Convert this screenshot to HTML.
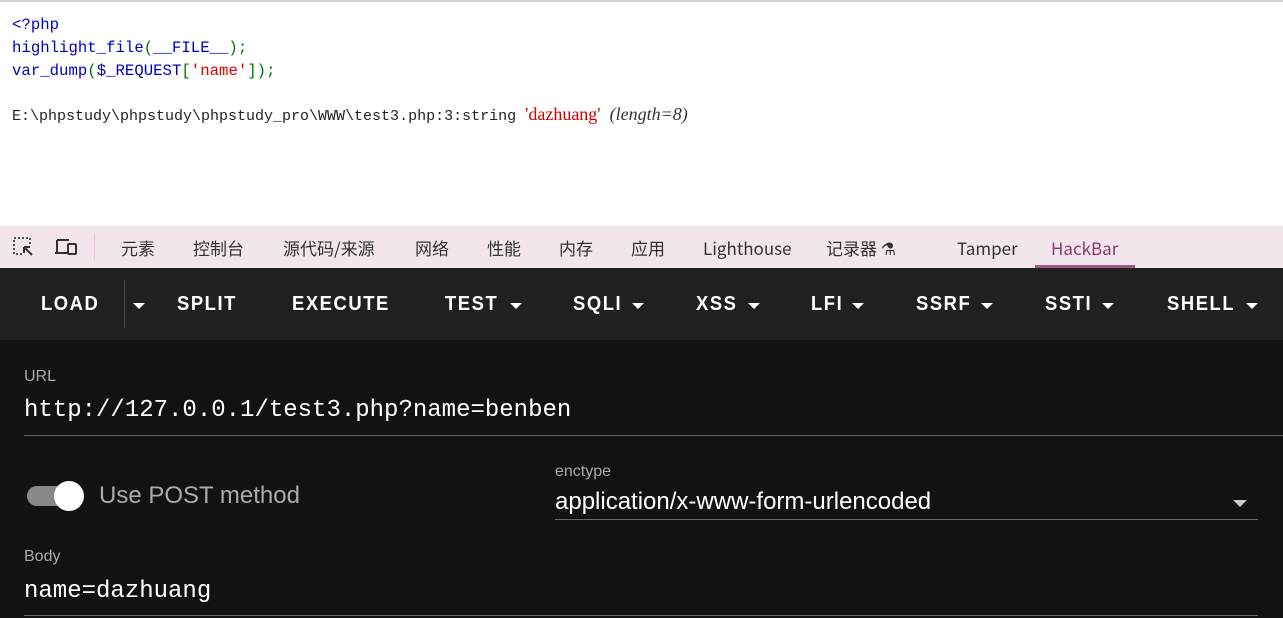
<!DOCTYPE html>
<html><head><meta charset="utf-8"><style>
*{margin:0;padding:0;box-sizing:border-box}
body{width:1283px;height:618px;overflow:hidden;position:relative;background:#121212;font-family:"Liberation Sans","Noto Sans CJK SC",sans-serif}
.a{position:absolute;white-space:nowrap}
#top{position:absolute;left:0;top:0;width:1283px;height:226px;background:#fff;border-top:2px solid #d0d0d0}
.code{font-family:"Liberation Mono","Noto Sans CJK SC",monospace;font-size:16px;line-height:23px;color:#0000bb;transform:scaleX(.98);transform-origin:left}
.g{color:#007700}.r{color:#dd0000}
#tb{position:absolute;left:0;top:226px;width:1283px;height:42px;background:#f3e5ee}
#tb .t{position:absolute;top:11px;height:22px;line-height:22px;font-size:17px;color:#333;font-family:"Noto Sans CJK SC",sans-serif}
#menu{position:absolute;left:0;top:268px;width:1283px;height:72px;background:#202020}
#menu .m{position:absolute;top:25px;color:#fff;font-weight:bold;font-size:20px;letter-spacing:1.7px;font-family:"Liberation Sans",sans-serif;transform:scaleX(.92);transform-origin:left}
.ar{position:absolute;top:35px;width:0;height:0;border-left:6px solid transparent;border-right:6px solid transparent;border-top:6px solid #fff}
.lbl{color:#aaa;font-size:16px}
.mono{font-family:"Liberation Mono",monospace;color:#fff;font-size:24px}
.line{position:absolute;height:1px;background:#666}
</style></head><body>
<div id="top">
<div class="a code" style="left:12px;top:12px">
<div>&lt;?php</div>
<div>highlight_file<span class="g">(</span>__FILE__<span class="g">);</span></div>
<div>var_dump<span class="g">(</span>$_REQUEST<span class="g">[</span><span class="r">'name'</span><span class="g">]);</span></div>
</div>
<div class="a" style="left:12px;top:102px;font-family:'Liberation Mono',monospace;font-size:15px;color:#222;letter-spacing:0px">E:\phpstudy\phpstudy\phpstudy_pro\WWW\test3.php:3:string <span style="color:#cc0000;font-family:'Liberation Serif',serif;font-size:18px">'dazhuang'</span> <i style="font-family:'Liberation Serif',serif;font-size:18px;color:#333">(length=8)</i></div>
</div>
<div id="tb">
<svg class="a" style="left:13px;top:11px" width="22" height="20" viewBox="0 0 22 20"><rect x="1" y="1" width="16" height="16" fill="none" stroke="#555" stroke-width="2" stroke-dasharray="2 2"/><rect x="9" y="8" width="12" height="12" fill="#f3e5ee"/><path d="M11 10l8 8M11 10v6M11 10h6" stroke="#333" stroke-width="2" fill="none"/></svg>
<svg class="a" style="left:54px;top:12px" width="24" height="18" viewBox="0 0 24 18"><path d="M3 2h12M3 2v12M1 15h14" stroke="#333" stroke-width="2" fill="none"/><rect x="14" y="6" width="8" height="10" rx="1" fill="none" stroke="#333" stroke-width="2"/></svg>
<div class="a" style="left:94px;top:8px;width:1px;height:26px;background:#e8c6dc"></div>
<span class="t" style="left:121px">元素</span>
<span class="t" style="left:193px">控制台</span>
<span class="t" style="left:283px">源代码/来源</span>
<span class="t" style="left:415px">网络</span>
<span class="t" style="left:487px">性能</span>
<span class="t" style="left:559px">内存</span>
<span class="t" style="left:631px">应用</span>
<span class="t" style="left:703px">Lighthouse</span>
<span class="t" style="left:826px">记录器 ⚗</span>
<span class="t" style="left:957px">Tamper</span>
<span class="t" style="left:1051px;color:#8a3a6e">HackBar</span>
<div class="a" style="left:1035px;top:39px;width:100px;height:3px;background:#9c5a85"></div>
</div>
<div id="menu">
<span class="m" style="left:41px">LOAD</span>
<div class="a" style="left:124px;top:12px;width:1px;height:48px;background:#444"></div>
<div class="ar" style="left:133px"></div>
<span class="m" style="left:177px">SPLIT</span>
<span class="m" style="left:292px">EXECUTE</span>
<span class="m" style="left:445px">TEST</span><div class="ar" style="left:510px"></div>
<span class="m" style="left:573px">SQLI</span><div class="ar" style="left:632px"></div>
<span class="m" style="left:696px">XSS</span><div class="ar" style="left:748px"></div>
<span class="m" style="left:811px">LFI</span><div class="ar" style="left:852px"></div>
<span class="m" style="left:916px">SSRF</span><div class="ar" style="left:981px"></div>
<span class="m" style="left:1045px">SSTI</span><div class="ar" style="left:1102px"></div>
<span class="m" style="left:1167px">SHELL</span><div class="ar" style="left:1246px"></div>
</div>
<span class="a lbl" style="left:24px;top:368px">URL</span>
<span class="a mono" style="left:24px;top:397px">http://127.0.0.1/test3.php?name=benben</span>
<div class="line" style="left:24px;top:435px;width:1259px"></div>
<div class="a" style="left:27px;top:486px;width:56px;height:20px;border-radius:10px;background:#888"></div>
<div class="a" style="left:54px;top:481px;width:30px;height:30px;border-radius:50%;background:#fff"></div>
<span class="a" style="left:99px;top:482px;font-size:24px;color:#aaa">Use POST method</span>
<span class="a lbl" style="left:555px;top:463px">enctype</span>
<span class="a" style="left:555px;top:488px;font-size:24px;color:#fff">application/x-www-form-urlencoded</span>
<div class="a" style="left:1233px;top:500px;border-left:7px solid transparent;border-right:7px solid transparent;border-top:7px solid #ccc"></div>
<div class="line" style="left:555px;top:519px;width:703px"></div>
<span class="a lbl" style="left:24px;top:548px">Body</span>
<span class="a mono" style="left:24px;top:578px">name=dazhuang</span>
<div class="line" style="left:24px;top:615px;width:1234px"></div>
</body></html>
